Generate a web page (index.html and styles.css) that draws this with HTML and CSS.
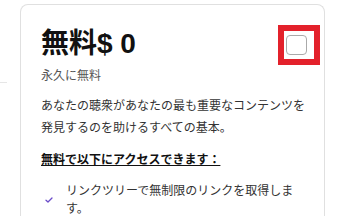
FILE: index.html
```html
<!DOCTYPE html>
<html lang="ja">
<head>
    <meta charset="UTF-8">
    <meta name="viewport" content="width=device-width, initial-scale=1.0">
    <title>無料プラン</title>
    <link rel="stylesheet" href="styles.css">
</head>
<body>
    <div class="edge-line"></div>
    <div class="plan-card">
        <div class="plan-header">
            <div class="plan-title">
                <h2>無料$ 0</h2>
                <div class="plan-sub">永久に無料</div>
            </div>
            <div class="plan-select">
                <input type="checkbox" class="plan-check">
            </div>
        </div>
        <p class="plan-desc">あなたの聴衆があなたの最も重要なコンテンツを発見するのを助けるすべての基本。</p>
        <div class="plan-access">無料で以下にアクセスできます：</div>
        <ul class="feature-list">
            <li>
                <svg class="tick" width="8" height="6" viewBox="0 0 8 6"><path d="M1 3.2 L3 5 L7 1" fill="none" stroke="#6a4cc9" stroke-width="1.3" stroke-linecap="round" stroke-linejoin="round"/></svg>
                <span>リンクツリーで無制限のリンクを取得します。</span>
            </li>
        </ul>
    </div>
</body>
</html>
```

FILE: styles.css
```css
html, body {
    height: 216px;
    overflow: hidden;
}
body {
    margin: 0;
    background-color: white;
    font-family: "Liberation Sans", "Noto Sans CJK JP", sans-serif;
    color: #222;
    position: relative;
}
.edge-line {
    position: absolute;
    left: 0;
    top: 82px;
    width: 7px;
    border-top: 1px solid #e6e6e6;
}
.plan-card {
    margin: 4px 0 0 20px;
    width: 305px;
    box-sizing: border-box;
    border: 1px solid #e0e0e0;
    border-bottom: none;
    border-radius: 8px 8px 0 0;
    padding: 19px 19px 0 20px;
    height: 212px;
    overflow: hidden;
}
.plan-header {
    display: flex;
    justify-content: space-between;
    align-items: flex-start;
}
.plan-title h2 {
    margin: 0;
    font-size: 28px;
    line-height: 40px;
    font-weight: bold;
    color: #111;
}
.plan-sub {
    margin-top: 3px;
    font-size: 12px;
    line-height: 18px;
    color: #555;
}
.plan-select {
    position: relative;
    margin-top: 11px;
    margin-right: -2px;
    width: 21px;
    height: 20px;
}
.plan-select::after {
    content: "";
    position: absolute;
    left: -8px;
    top: -10px;
    right: -13px;
    bottom: -10px;
    border: 6px solid #e3212b;
}
.plan-check {
    appearance: none;
    -webkit-appearance: none;
    margin: 0;
    width: 21px;
    height: 20px;
    box-sizing: border-box;
    border: 1px solid #aaa;
    border-radius: 4px;
    background: white;
    display: block;
}
.plan-desc {
    margin: 10px 0 0;
    font-size: 12px;
    line-height: 22px;
    color: #333;
}
.plan-access {
    margin-top: 10px;
    font-size: 12px;
    line-height: 22px;
    font-weight: bold;
    text-decoration: underline;
    color: #111;
}
.feature-list {
    list-style: none;
    margin: 11px 0 0;
    padding: 0;
}
.feature-list li {
    display: flex;
    align-items: center;
    font-size: 12px;
    line-height: 18px;
    color: #333;
}
.tick {
    flex: none;
    margin: 0 13px 0 4px;
}
```
